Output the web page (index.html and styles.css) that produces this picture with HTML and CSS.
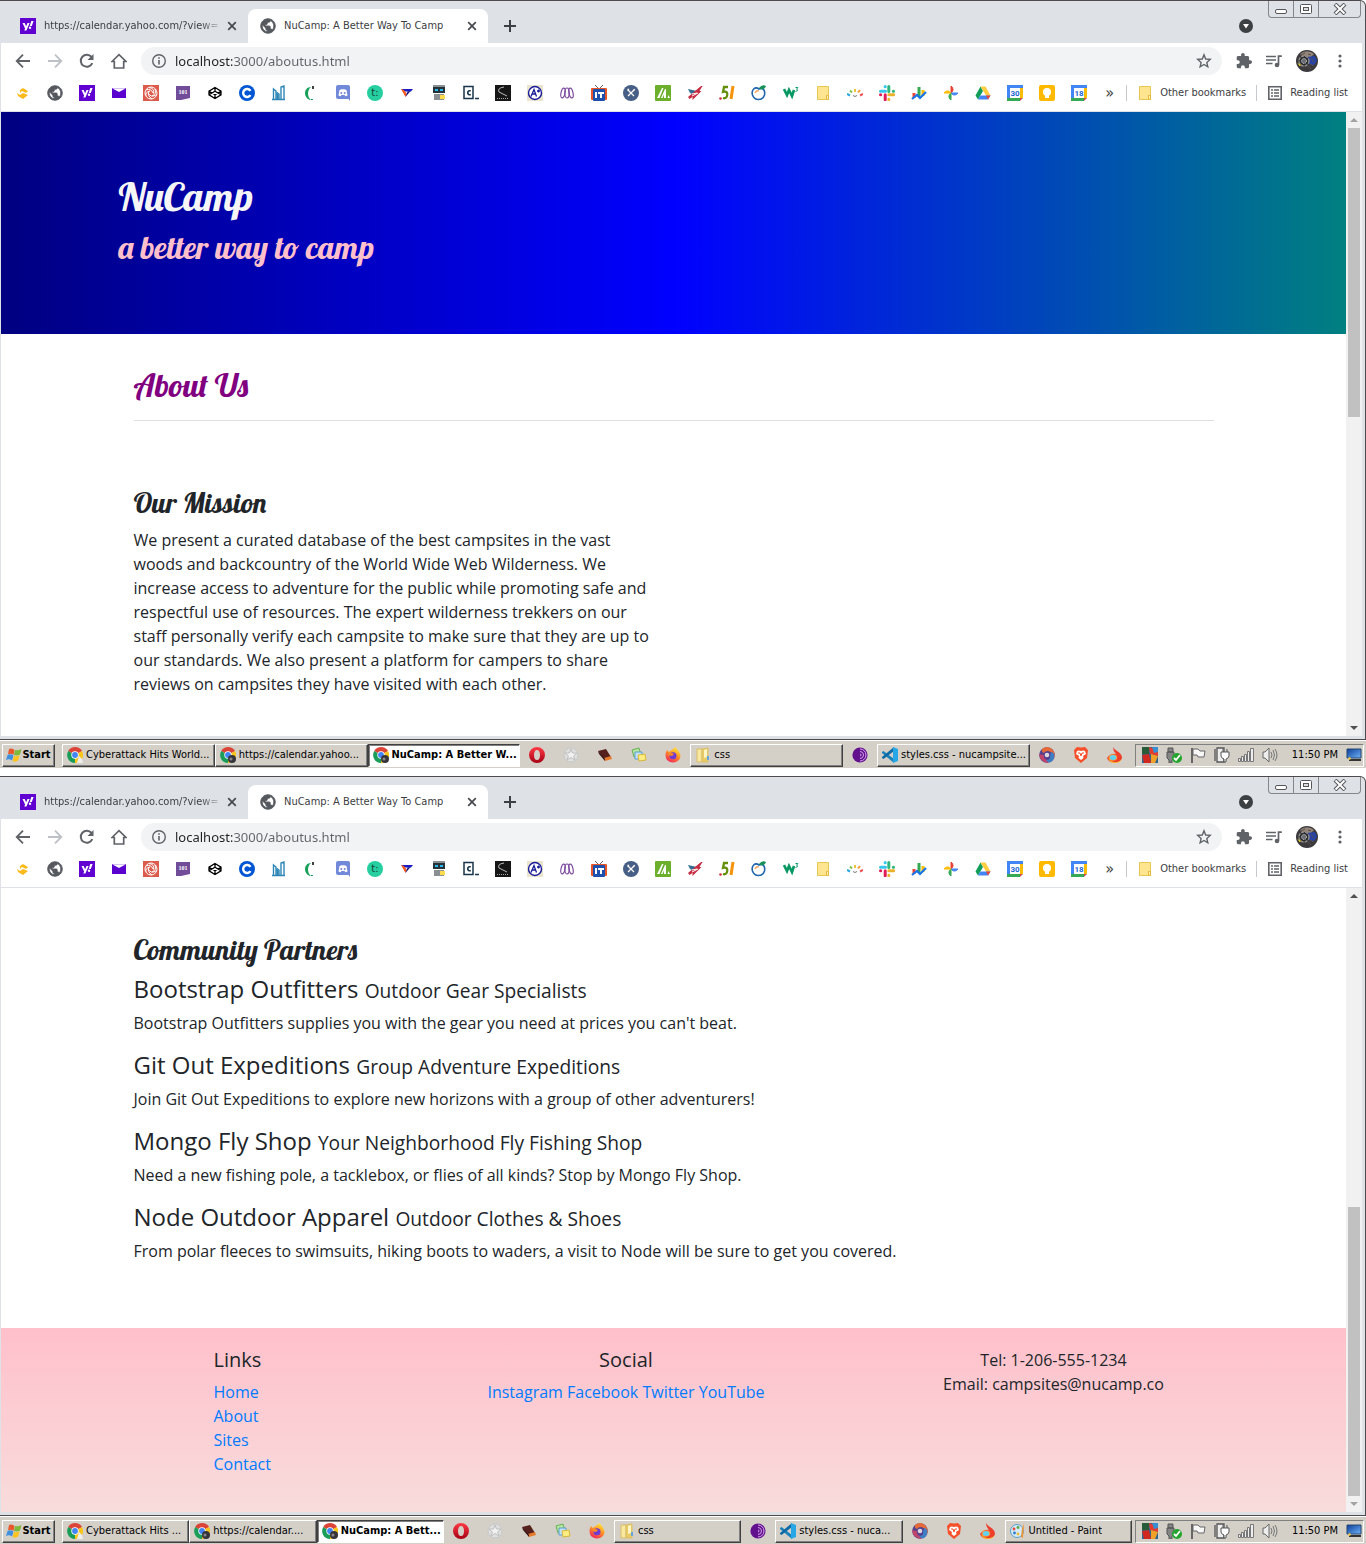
FILE: index.html
```html
<!DOCTYPE html>
<html lang="en">
<head>
<meta charset="utf-8">
<title>NuCamp: A Better Way To Camp</title>
<link rel="stylesheet" href="styles.css">
</head>
<body>
<svg class="sprite" aria-hidden="true">
  <defs>
    <linearGradient id="gOpera" x1="0" y1="0" x2="0" y2="1"><stop offset="0" stop-color="#ff3b45"/><stop offset="1" stop-color="#a70014"/></linearGradient>
    <linearGradient id="gFox" x1="0.8" y1="0" x2="0.3" y2="1"><stop offset="0" stop-color="#fff04a"/><stop offset="0.45" stop-color="#ff9a22"/><stop offset="1" stop-color="#f4235a"/></linearGradient>
    <linearGradient id="gScreen" x1="0" y1="0" x2="1" y2="1"><stop offset="0" stop-color="#0d3f9c"/><stop offset="1" stop-color="#6fb2f5"/></linearGradient>
  </defs>
  <symbol id="yahoo" viewBox="0 0 16 16"><rect width="16" height="16" fill="#6001d2"/><path d="M2.500 5h2.200l1.400 3.300L7.500 5h2.100L6.400 12.500H4.300l.8-2zM11.300 3h2.300l-1.800 5H9.700z" fill="#fff"/><circle cx="10" cy="9.800" r="1.200" fill="#fff"/></symbol>
  <symbol id="globe" viewBox="1 1 22 22"><path d="M12 2C6.480 2 2 6.480 2 12s4.480 10 10 10 10-4.480 10-10S17.520 2 12 2zm-1 17.930c-3.950-.49-7-3.850-7-7.930 0-.62.08-1.210.21-1.790L9 15v1c0 1.100.9 2 2 2v1.930zm6.900-2.540c-.26-.81-1-1.390-1.900-1.390h-1v-3c0-.55-.45-1-1-1H8v-2h2c.55 0 1-.45 1-1V7h2c1.100 0 2-.9 2-2v-.41c2.930 1.190 5 4.060 5 7.410 0 2.080-.8 3.970-2.100 5.390z" fill="#55595e" stroke="#55595e" stroke-width="1.200"/></symbol>
  <symbol id="close" viewBox="0 0 16 16"><path d="m4.200 4.200 7.600 7.600m0-7.600-7.600 7.600" stroke="#45494d" stroke-width="1.700"/></symbol>
  <symbol id="plus" viewBox="0 0 16 16"><path d="M8 2v12M2 8h12" stroke="#3c4043" stroke-width="2"/></symbol>
  <symbol id="caret" viewBox="0 0 16 16"><circle cx="8" cy="8" r="7" fill="#3c4043"/><path d="M5 6h6l-3 4.500z" fill="#fff"/></symbol>
  <symbol id="back" viewBox="0 0 16 16"><path d="M15 8H2m6-6.300L1.700 8 8 14.300" fill="none" stroke="#5f6368" stroke-width="1.800"/></symbol>
  <symbol id="forward" viewBox="0 0 16 16"><path d="M1 8h13M8 1.700 14.300 8 8 14.300" fill="none" stroke="#bdc1c6" stroke-width="1.800"/></symbol>
  <symbol id="reload" viewBox="0 0 16 16"><path d="M13.300 10.200A6 6 0 1 1 12.500 4" fill="none" stroke="#5f6368" stroke-width="2"/><path d="M14.500 1v6h-6z" fill="#5f6368"/></symbol>
  <symbol id="home" viewBox="0 0 16 16"><path d="M1 8.500 8 1.700l7 6.800h-2.300V15H3.300V8.500z" fill="none" stroke="#5f6368" stroke-width="1.700"/></symbol>
  <symbol id="info" viewBox="0 0 16 16"><circle cx="8" cy="8" r="6.300" fill="none" stroke="#5f6368" stroke-width="1.400"/><path d="M8 7v4.500M8 4.200v1.600" stroke="#5f6368" stroke-width="1.600"/></symbol>
  <symbol id="star" viewBox="0 0 16 16"><path d="m8 1.800 1.700 4.200 4.500.4-3.400 3 1 4.400L8 11.500l-3.900 2.300 1-4.400-3.400-3L6.300 6z" fill="none" stroke="#5f6368" stroke-width="1.400"/></symbol>
  <symbol id="puzzle" viewBox="1 1 22 22"><path d="M20.500 11H19V7c0-1.100-.9-2-2-2h-4V3.500C13 2.120 11.880 1 10.500 1S8 2.120 8 3.500V5H4c-1.100 0-2 .9-2 2v3.800h1.500c1.490 0 2.700 1.210 2.700 2.700s-1.210 2.700-2.700 2.700H2V20c0 1.100.9 2 2 2h3.800v-1.500c0-1.490 1.210-2.700 2.700-2.700s2.700 1.210 2.700 2.700V22H17c1.100 0 2-.9 2-2v-4h1.500c1.380 0 2.500-1.120 2.500-2.500S21.880 11 20.500 11z" fill="#5f6368"/></symbol>
  <symbol id="music" viewBox="0 0 16 16"><path d="M0 3.500h10M0 7h10M0 10.500h6.500M15.800 3.200h-3.300v8.500" stroke="#5f6368" stroke-width="1.700" fill="none"/><circle cx="11" cy="12" r="2.300" fill="#5f6368"/></symbol>
  <symbol id="avatar" viewBox="0 0 22 22"><circle cx="11" cy="11" r="11" fill="#3c3a3d"/><path d="M4 4a10 10 0 0 1 14 0l-3 3H7z" fill="#93857a"/><path d="m11 7 8-1 2 5-3 4-6-1z" fill="#2743a8"/><circle cx="8" cy="11" r="5" fill="#26282c" stroke="#8d8a85" stroke-width="1.500" stroke-dasharray="3 1"/><circle cx="8" cy="11" r="2.500" fill="#6c6e74" stroke="#ddd" stroke-dasharray="1 1"/><path d="m1.500 13 2 3 2-1z" fill="#e6d82e"/><path d="m12 16 3 3m-1-5 4 2M15 8l3 4M5 5l4-2m3 1 3 1" stroke="#57504d"/></symbol>
  <symbol id="more" viewBox="0 0 16 16"><circle cx="8" cy="3" r="1.600" fill="#5f6368"/><circle cx="8" cy="8" r="1.600" fill="#5f6368"/><circle cx="8" cy="13" r="1.600" fill="#5f6368"/></symbol>

  <symbol id="b-wave" viewBox="0 0 16 16"><path d="m5 5 3-2 5 3-2 2-4-2-2 2zM2 8l3 2 3-2 5 2-5 4-5-3z" fill="#fbb91b"/></symbol>
  <symbol id="b-mail" viewBox="0 0 16 16"><path d="M1 3h14v10H1z" fill="#5b01cf"/><path d="m1 3.300 7 3.700 7-3.700z" fill="#fff"/></symbol>
  <symbol id="b-swirl" viewBox="0 0 16 16"><rect width="16" height="16" fill="#dc5c4c"/><g fill="none" stroke="#fff"><circle cx="8" cy="8" r="6"/><path d="M3 5q5-2 7 3M6 2.500q6 1 4.500 6M12 4q2 5-3 7M13 10q-5 3-8-2M9 14q-5-3-3-8M3 11q-1-4 4-5"/></g></symbol>
  <symbol id="b-101" viewBox="0 0 16 16"><path d="M1 1h14v12l-9 2H1z" fill="#714c98"/></symbol>
  <symbol id="b-codepen" viewBox="0 0 16 16"><path d="m8 2.500 6 3.700v3.600l-6 3.700-6-3.700V6.200zM8 2.500v3.700m0 3.600v3.700M2 6.200l6 3.600 6-3.600M2 9.800l6-3.600 6 3.600" fill="none" stroke="#000" stroke-width="1.300"/></symbol>
  <symbol id="b-c" viewBox="0 0 16 16"><circle cx="8" cy="8" r="8" fill="#0056d2"/><path d="M11.500 5.800a4 4 0 1 0 0 4.400" fill="none" stroke="#fff" stroke-width="2.400"/></symbol>
  <symbol id="b-bars" viewBox="0 0 16 16"><path d="M2.500 14V4L5 6v8m1.500 0V8L8 9v5m2 0V2l3-1v13M1 14.500h13" fill="none" stroke="#2d86b6" stroke-width="1.400"/></symbol>
  <symbol id="b-moon" viewBox="0 0 16 16"><path d="M8 2C0 2 0 14 8 15 4 12 4 5 8 2z" fill="#17a05a"/><path d="M10 1v3" stroke="#111" stroke-width="1.600"/><path d="M8 14.500h2" stroke="#17a05a"/></symbol>
  <symbol id="b-discord" viewBox="0 0 16 16"><rect x="1" width="14" height="14" rx="2" fill="#7289da"/><path d="M12 12h3v4z" fill="#7289da"/><path d="M3.500 10.500 4.500 5l2-.7h3l2 .7 1 5.500-2 .8-1-1.200H6.500l-1 1.200z" fill="#fff"/><circle cx="6.300" cy="8" r="1" fill="#7289da"/><circle cx="9.700" cy="8" r="1" fill="#7289da"/></symbol>
  <symbol id="b-t" viewBox="0 0 16 16"><circle cx="8" cy="8" r="8" fill="#25cfa0"/></symbol>
  <symbol id="b-tri" viewBox="0 0 16 16"><path d="M2 4h12l-2 2.500H6z" fill="#1a1bc8"/><path d="m2 4 4.500 8L8 9 5 5z" fill="#f05a1e"/><path d="m6.500 12 5-6-3 .5z" fill="#12127e"/></symbol>
  <symbol id="b-robot" viewBox="0 0 16 16"><path d="M2 0h12v2H2zM3 9h10v6H3z" fill="#8a8f93"/><path d="M2 2h12v6H2z" fill="#253238"/><path d="M4 4h3v2H4zm5 0h3v2H9z" fill="#29b8ef"/><path d="M9 10h5v4H9z" fill="#ffdc4b"/></symbol>
  <symbol id="b-code" viewBox="0 0 16 16"><rect x="1" y="1.500" width="9" height="12" fill="none" stroke="#183549" stroke-width="1.500"/><path d="M7.700 6a2 2 0 1 0 0 3.500M12 13.500h4" fill="none" stroke="#183549" stroke-width="1.600"/></symbol>
  <symbol id="b-black" viewBox="0 0 16 16"><rect width="16" height="16" fill="#161616"/><path d="M9 2Q2 3 4 7l8 4" fill="none" stroke="#bbb"/><path d="M2 13.500h12" stroke="#aaa" stroke-dasharray="1 1"/></symbol>
  <symbol id="b-aplus" viewBox="0 0 16 16"><rect width="16" height="16" fill="#ebe5cf"/><circle cx="8" cy="8" r="6.500" fill="#fff" stroke="#1a1b99" stroke-width="1.400"/><path d="m4 11.500 3-7 2.500 7M5 9h4m1-3h3m-1.500-1.500v3" fill="none" stroke="#1a1b99" stroke-width="1.300"/></symbol>
  <symbol id="b-purple" viewBox="0 0 16 16"><g fill="none" stroke="#7d4aa0" stroke-width="1.200"><ellipse cx="4" cy="8" rx="2" ry="5" transform="rotate(12 4 8)"/><ellipse cx="8" cy="8" rx="2.200" ry="5"/><ellipse cx="12" cy="8" rx="2" ry="5" transform="rotate(-12 12 8)"/></g></symbol>
  <symbol id="b-it" viewBox="0 0 16 16"><path d="m4 0 4 4 4-4" fill="none" stroke="#666"/><rect y="3" width="16" height="12" rx="1" fill="#e9562a"/><rect x="2" y="4" width="12" height="12" rx="1" fill="#1d51ad"/><path d="M5 7v6m2-5h6m-3 0v5" stroke="#fff" stroke-width="2"/></symbol>
  <symbol id="b-tools" viewBox="0 0 16 16"><circle cx="8" cy="8" r="8" fill="#475f86"/><path d="m5 5 6 6m0-6-6 6" stroke="#fff" stroke-width="1.200"/><path d="m4.500 4.500 1.500.5M10.500 4.500l1 1" stroke="#fff" stroke-width="2"/></symbol>
  <symbol id="b-green" viewBox="0 0 16 16"><rect width="16" height="16" rx="1" fill="#6baf2d"/><path d="M2 13 7 3h1.500L4.500 13zm4 0 4-9h1v9H9V9.500L7.500 13zm6.500 0 1-3 1.500 3z" fill="#fff"/></symbol>
  <symbol id="b-wing" viewBox="0 0 16 16"><path d="m1 4 9 2-2 4-5-2z" fill="#356f91"/><path d="M1 12 14 1l1.500 0-3 5h2l-6 6-3 3v-3l-3 2z" fill="#c62d43"/><path d="m5 9 5-1M5 11l6-3" stroke="#fff"/></symbol>
  <symbol id="b-51" viewBox="0 0 16 16"><path d="M9 2H5L4 7c4-1 5 1 4 4q-1 3-4 2" fill="none" stroke="#638f0b" stroke-width="2.300"/><path d="m14 1-2 13" stroke="#f6930b" stroke-width="3"/><circle cx="1.500" cy="13.500" r="1.300" fill="#d32b35"/></symbol>
  <symbol id="b-peach" viewBox="0 0 16 16"><path d="M8 4C4 1 0 5 1.500 10c2 6 10 6 12 0 1-5-2-8-5.500-6z" fill="#fff" stroke="#1f66ac" stroke-width="1.600"/><path d="M8 3q3-4 7-2-1 4-6 3" fill="#17915a"/><path d="M4 8q1-3 4-2" fill="none" stroke="#f5a35a" stroke-width="1.300"/></symbol>
  <symbol id="b-w3" viewBox="0 0 16 16"><path d="m1 4 3 6 2-5 3 6 2-6" fill="none" stroke="#059862" stroke-width="2.600"/><path d="M12.500 2.500h2.300l-1 1.500q2 2-1.300 2.500" fill="none" stroke="#059862"/></symbol>
  <symbol id="folder" viewBox="0 0 16 16"><path d="M2.500 1.500h11v13h-11z" fill="#ffe58f" stroke="#e8c654"/><path d="M11.500 10.500h2v4h-2z" fill="#fff0b4" stroke="#e2b93d"/></symbol>
  <symbol id="b-dots" viewBox="0 0 16 16"><g stroke-width="2"><path d="m0 9 3 1.500" stroke="#26a4df"/><path d="m3 5.500 2 2" stroke="#7fc24c"/><path d="M8 4v3" stroke="#f2c331"/><path d="m13 5-2 2.500" stroke="#f39a36"/><path d="m13 10.500 3-1.500" stroke="#ee4e55"/></g><path d="M6 10.500q2 2 4 0" fill="none" stroke="#777"/></symbol>
  <symbol id="b-slack" viewBox="0 0 16 16"><g stroke-width="3" stroke-linecap="round"><path d="M1.500 6.200h5M6.200 1.500v.2" stroke="#36c5f0"/><path d="M9.800 1.500v5M14.300 6.200h.2" stroke="#2eb67d"/><path d="M9.800 9.800h5M9.800 14.300v.2" stroke="#ecb22e"/><path d="M6.200 9.800v5M1.500 9.800h.2" stroke="#e01e5a"/></g></symbol>
  <symbol id="b-chart" viewBox="0 0 16 16"><path d="M3 8v5" stroke="#ea4335" stroke-width="3"/><path d="M8 2v10" stroke="#34a853" stroke-width="3"/><path d="M12 5v6" stroke="#fbbc04" stroke-width="3"/><path d="m1 14 5-4 3 3 6-6" fill="none" stroke="#1a73e8" stroke-width="2.200"/></symbol>
  <symbol id="b-photos" viewBox="0 0 16 16"><path d="M8 8V1a4 4 0 0 1 0 7" fill="#ea4335" stroke="#ea4335"/><path d="M8 8h7a4 4 0 0 1-7 0" fill="#4285f4" stroke="#4285f4"/><path d="M8 8v7a4 4 0 0 1 0-7" fill="#34a853" stroke="#34a853"/><path d="M8 8H1a4 4 0 0 1 7 0" fill="#fbbc04" stroke="#fbbc04"/></symbol>
  <symbol id="b-drive" viewBox="0 0 16 16"><path d="M5.500 1.500.5 10.500 3 14.500l5-8.500z" fill="#0f9d58"/><path d="M5.500 1.500h5l5 9H11z" fill="#ffcd40"/><path d="M5.500 10.500h10L13 14.500H3z" fill="#4285f4"/><path d="M11 10.500h4.500l-2.500 4z" fill="#ea4335"/></symbol>
  <symbol id="cal" viewBox="0 0 16 16"><path d="M0 0h16v16H0z" fill="#4285f4"/><path d="M13 3h3v10h-3z" fill="#fbbc04"/><path d="M0 13h13v3H0z" fill="#34a853"/><path d="M13 13h3l-3 3z" fill="#ea4335"/><path d="m16 13-3 3h3z" fill="#fff"/><path d="M3 3h10v10H3z" fill="#fff"/></symbol>
  <symbol id="b-keep" viewBox="0 0 16 16"><rect width="16" height="16" rx="2" fill="#ffba00"/><circle cx="8" cy="7" r="4" fill="#fff"/><path d="M6 10h4v3H6z" fill="#fff"/></symbol>
  <symbol id="reading" viewBox="0 0 16 16"><path d="M1.800 1.800h12.400v12.400H1.800z" fill="none" stroke="#5f6368" stroke-width="1.600"/><path d="M4 5h2m1 0h5M4 8h2m1 0h5m-8 3h2m1 0h5" stroke="#5f6368" stroke-width="1.500"/></symbol>

  <symbol id="t-start" viewBox="0 0 16 16"><path d="M3 2q3-1.500 5.500 1L7.500 8Q5 6 2 7.500z" fill="#e8562b"/><path d="M9 3q3 1 6.500-1l-1.500 5.500q-3 1.500-6 .5z" fill="#7cb83a"/><path d="M1.500 8q3-1.500 6 .5l-1.500 5q-2.500-2-6-.5z" fill="#3d8fe0"/><path d="M8 9q3 1 6-1l-2 5.500q-2 2-5.500.5z" fill="#fcc31f"/></symbol>
  <symbol id="chrome" viewBox="0 0 16 16"><path d="M8 8 1.200 4A8 8 0 0 1 15 4z" fill="#dc4437"/><path d="M8 8 15 4a8 8 0 0 1-7 12z" fill="#f8c51c"/><path d="M8 8v8A8 8 0 0 1 1.200 4z" fill="#1a9d58"/><circle cx="8" cy="8" r="3.700" fill="#fff"/><circle cx="8" cy="8" r="2.900" fill="#4385f5"/></symbol>
  <symbol id="t-chrome1" viewBox="0 0 16 16"><use href="#chrome"/><path d="m10 16 2-7 3 3 1 4z" fill="#eee"/></symbol>
  <symbol id="t-chrome2" viewBox="0 0 16 16"><use href="#chrome"/><circle cx="12" cy="12" r="4" fill="#35343b"/><circle cx="11" cy="12" r="1.500" fill="#888"/></symbol>
  <symbol id="t-opera" viewBox="0 0 16 16"><path fill-rule="evenodd" d="M8 0a8 8 0 1 0 0 16A8 8 0 1 0 8 0zm0 3c2 0 3 2 3 5s-1 5-3 5-3-2-3-5 1-5 3-5z" fill="url(#gOpera)"/></symbol>
  <symbol id="t-star" viewBox="0 0 16 16"><circle cx="8" cy="8" r="7" fill="#dedfdf" stroke="#c8c8c8"/><path d="m8 2 1.500 4H14l-3.500 3 1.500 4-4-2.500L4 13l1.500-4L2 6h4.500z" fill="#f2f2f2" stroke="#bebebe"/></symbol>
  <symbol id="t-book" viewBox="0 0 16 16"><path d="m1 4 8-2 5 8-7 2z" fill="#56201c"/><path d="m7 11 7-2 1 3-7 2z" fill="#e67b2c"/><path d="m1 4 1 3 6 7v-2z" fill="#3a1212"/></symbol>
  <symbol id="t-notes" viewBox="0 0 16 16"><path d="m1 3 7-2 2 7-7 2z" fill="#b5e89e" stroke="#68ae5a"/><path d="M4 5h7v7H4z" fill="#c1e2fa" stroke="#5c9dcc"/><path d="m7 8 7-1 1 6-7 1z" fill="#ffec83" stroke="#d7b83a"/></symbol>
  <symbol id="t-fox" viewBox="0 0 16 16"><path d="M8 2q2-1 2-2 3 2 4 5 3 4 0 8-6 5-12 0Q-1 8 2 3l2 2z" fill="url(#gFox)"/><circle cx="8" cy="8.800" r="3.500" fill="#703bd1"/><path d="M3 7q3-2 6 0l-2 2q-3 0-4-2z" fill="#ff8b20"/></symbol>
  <symbol id="t-folder" viewBox="0 0 16 16"><path d="M2 2h5v13H2z" fill="#f8e79e" stroke="#d9be6a"/><path d="m7 2 6-1v14H7z" fill="#e9cb63" stroke="#d9be6a"/><path d="m9 3 3-1v8l-3 1z" fill="#fff6c8"/><path d="M12 9h2v4h-2z" fill="#64a7dc"/></symbol>
  <symbol id="t-tor" viewBox="0 0 16 16"><circle cx="8" cy="8" r="7.600" fill="#63108f"/><path d="M8 2a6 6 0 0 1 0 12M8 4.500a3.500 3.500 0 0 1 0 7M8 7a1 1 0 0 1 0 2" fill="none" stroke="#d6a6ed"/></symbol>
  <symbol id="t-code" viewBox="0 0 16 16"><path d="m0 5 1.500-1L12 12v4L0 6z" fill="#1c80bb"/><path d="m0 11 1.500 1L12 4V0L0 10z" fill="#0d6aa5"/><path d="m11 0 5 2v12l-5 2z" fill="#27a7e6"/></symbol>
  <symbol id="t-ball" viewBox="0 0 16 16"><circle cx="8" cy="8" r="7.800" fill="#54408f"/><path d="M3 2q5-4 10 0 4 4 2 9-1-6-6-7-3 0-4 2Q2 5 3 2z" fill="#e66a38"/><path d="M0 7q1 8 9 9 1-2-1-3-4-1-3-5-3 0-5-1z" fill="#c3426a"/><path d="M11 9q1 4-4 4 2 3 5 2 4-3 3-8-1-2-3-2 0 2-1 4z" fill="#3d7fc4"/><circle cx="8" cy="8" r="2.300" fill="#ddd5df"/></symbol>
  <symbol id="t-brave" viewBox="0 0 16 16"><path d="m4 0 4 .5L12 0l3 3-1 8-6 5-6-5-1-8z" fill="#f6502a"/><path d="m4 4 2-.5 2 .5 2-.5 2 .5 1 3-3 2 .5 2-2.500 2-2.500-2L6 9 3 7z" fill="#fff"/><path d="M5 6h2l1 3 1-3h2" fill="none" stroke="#f6502a"/></symbol>
  <symbol id="t-flame" viewBox="0 0 16 16"><path d="M6 0q1 2 4 4 5 3 5 7-1 4-7 4.500-6 .5-8-4.500 4-5 9-4-3-3-3-7z" fill="#ed3d2b"/><path d="M1 10q3 6 9 5 4-1 5-4-1 5-7 5-6 0-7-6z" fill="#ffb21f"/><ellipse cx="6" cy="10.500" rx="4.200" ry="3.200" fill="#ff9634"/><ellipse cx="6" cy="10.500" rx="3.200" ry="2.500" fill="#62d0ef"/></symbol>
  <symbol id="t-paint" viewBox="0 0 16 16"><ellipse cx="7" cy="8" rx="6.500" ry="6.500" fill="#d5eafa" stroke="#5c9fc8"/><circle cx="4" cy="6" r="1.400" fill="#e64a35"/><circle cx="8" cy="4.500" r="1.400" fill="#52a93d"/><circle cx="4.500" cy="10" r="1.400" fill="#317dc8"/><circle cx="8" cy="11" r="1.400" fill="#eebf29"/><path d="m14 1-1 14-2-1 1-9z" fill="#eb9738"/></symbol>
  <symbol id="y-tiles" viewBox="0 0 16 16"><path d="M0 0h16v16H0z" fill="#2d6690"/><path d="M0 0h7v7H0z" fill="#275b39"/><path d="m7 0 9 3v6L8 7z" fill="#e63b2d"/><path d="m0 8 7-1 2 9H2z" fill="#d0281f"/><path d="m9 7 7 2-3 7H9z" fill="#f3a027"/><path d="M10 0h6v5l-4 1z" fill="#398ed3"/></symbol>
  <symbol id="y-usb" viewBox="0 0 16 16"><path d="M2 1h5v4H2zM1 5h7v6l-2 2v3H3v-3l-2-2z" fill="#858585" stroke="#555"/><circle cx="11" cy="11" r="5" fill="#25a52e"/><path d="m8 11 2 2 4-5" fill="none" stroke="#fff" stroke-width="1.800"/></symbol>
  <symbol id="y-flag" viewBox="0 0 16 16"><path d="M2 1v15" stroke="#666" stroke-width="2"/><path d="M3 2h5l2 2h5l-1 6H8L7 8H3z" fill="#f7f7f7" stroke="#666"/></symbol>
  <symbol id="y-power" viewBox="0 0 16 16"><path d="M3 1h7v14H3zM1 2v12" fill="#eee" stroke="#555" stroke-width="1.300"/><path d="M7 5h8v4q-1 3-3 3v3h-2v-3Q7 11 7 9zM9 2v3m4-3v3" fill="#fff" stroke="#555"/></symbol>
  <symbol id="y-signal" viewBox="0 0 16 16"><path d="M.5 11.500h2v3h-2zm3-2h2v5h-2zm3-2h2v7h-2zm3-3h2v10h-2zm3-3h3v13h-3z" fill="#eee" stroke="#777"/></symbol>
  <symbol id="y-sound" viewBox="0 0 16 16"><path d="M1 5h2l4-4v14l-4-4H1z" fill="#eee" stroke="#666"/><path d="M9 5q2 3 0 6m2-8q3 5 0 10m2-11q4 6 0 12" fill="none" stroke="#777"/></symbol>
  <symbol id="y-desk" viewBox="0 0 16 16"><path d="M1 2h14v9H1z" fill="url(#gScreen)" stroke="#24466f"/><path d="M3 13h12" stroke="#333" stroke-width="2"/><circle cx="3.500" cy="11.500" r="1.300" fill="#f5d44a"/></symbol>
  <symbol id="w-min" viewBox="0 0 16 12"><rect x="2.500" y="6.500" width="11" height="4" rx="1.500" fill="#fff" stroke="#55565c"/></symbol>
  <symbol id="w-max" viewBox="0 0 16 12"><rect x="2.500" y="1.500" width="11" height="9" rx="1" fill="#fff" stroke="#55565c"/><rect x="5.500" y="4.500" width="5" height="3" fill="#ddd" stroke="#55565c"/></symbol>
  <symbol id="w-close" viewBox="0 0 16 12"><path d="m3 1 10 10m0-10L3 11" stroke="#55565c" stroke-width="4"/><path d="m3.500 1.500 9 9m0-9-9 9" stroke="#fff" stroke-width="2"/></symbol>
</svg>

<section class="screen">
  <div class="window">
    <div class="chrome">
      <div class="tabstrip">
        <div class="tab"><svg><use href="#yahoo"/></svg><span class="tab-title fade">https://calendar.yahoo.com/?view=</span><button aria-label="Close tab"><svg><use href="#close"/></svg></button></div>
        <div class="tab active"><svg><use href="#globe"/></svg><span class="tab-title">NuCamp: A Better Way To Camp</span><button aria-label="Close tab"><svg><use href="#close"/></svg></button></div>
        <button class="new-tab" aria-label="New tab"><svg><use href="#plus"/></svg></button>
        <button class="tab-search" aria-label="Search tabs"><svg><use href="#caret"/></svg></button>
        <div class="controls"><button aria-label="Minimize"><svg><use href="#w-min"/></svg></button><button aria-label="Restore"><svg><use href="#w-max"/></svg></button><button class="wide" aria-label="Close"><svg><use href="#w-close"/></svg></button></div>
      </div>
      <div class="toolbar">
        <button aria-label="Back"><svg><use href="#back"/></svg></button><button aria-label="Forward"><svg><use href="#forward"/></svg></button><button aria-label="Reload"><svg><use href="#reload"/></svg></button><button aria-label="Home"><svg><use href="#home"/></svg></button>
        <div class="omnibox"><svg><use href="#info"/></svg><input type="text" aria-label="Address" value="localhost:3000/aboutus.html"><button aria-label="Bookmark this page"><svg><use href="#star"/></svg></button></div>
        <div class="actions"><button aria-label="Extensions"><svg><use href="#puzzle"/></svg></button><button aria-label="Media"><svg><use href="#music"/></svg></button><button aria-label="Profile"><svg class="avatar"><use href="#avatar"/></svg></button><button aria-label="Menu"><svg><use href="#more"/></svg></button></div>
      </div>
      <nav class="bookmarks" aria-label="Bookmarks">
        <a href="#"><svg><use href="#b-wave"/></svg></a><a href="#"><svg><use href="#globe"/></svg></a><a href="#"><svg><use href="#yahoo"/></svg></a><a href="#"><svg><use href="#b-mail"/></svg></a><a href="#"><svg><use href="#b-swirl"/></svg></a><a href="#"><svg><use href="#b-101"/><text class="label-101" x="8" y="9">101</text></svg></a><a href="#"><svg><use href="#b-codepen"/></svg></a><a href="#"><svg><use href="#b-c"/></svg></a><a href="#"><svg><use href="#b-bars"/></svg></a><a href="#"><svg><use href="#b-moon"/></svg></a><a href="#"><svg><use href="#b-discord"/></svg></a><a href="#"><svg><use href="#b-t"/><text class="label-t" x="8" y="11">t:</text></svg></a><a href="#"><svg><use href="#b-tri"/></svg></a><a href="#"><svg><use href="#b-robot"/></svg></a><a href="#"><svg><use href="#b-code"/></svg></a><a href="#"><svg><use href="#b-black"/></svg></a><a href="#"><svg><use href="#b-aplus"/></svg></a><a href="#"><svg><use href="#b-purple"/></svg></a><a href="#"><svg><use href="#b-it"/></svg></a><a href="#"><svg><use href="#b-tools"/></svg></a><a href="#"><svg><use href="#b-green"/></svg></a><a href="#"><svg><use href="#b-wing"/></svg></a><a href="#"><svg><use href="#b-51"/></svg></a><a href="#"><svg><use href="#b-peach"/></svg></a><a href="#"><svg><use href="#b-w3"/></svg></a><a href="#"><svg><use href="#folder"/></svg></a><a href="#"><svg><use href="#b-dots"/></svg></a><a href="#"><svg><use href="#b-slack"/></svg></a><a href="#"><svg><use href="#b-chart"/></svg></a><a href="#"><svg><use href="#b-photos"/></svg></a><a href="#"><svg><use href="#b-drive"/></svg></a><a href="#"><svg><use href="#cal"/><text class="label-day" x="8" y="11">30</text></svg></a><a href="#"><svg><use href="#b-keep"/></svg></a><a href="#"><svg><use href="#cal"/><text class="label-day" x="8" y="11">18</text></svg></a>
        <button class="overflow">»</button>
        <button class="labelled"><svg><use href="#folder"/></svg>Other bookmarks</button>
        <button class="labelled"><svg><use href="#reading"/></svg>Reading list</button>
      </nav>
    </div>
    <div class="viewport">
      <div class="page">
        <header class="jumbotron"><div class="container"><h1>NuCamp</h1><h2>a better way to camp</h2></div></header>
        <main class="content about">
          <h2 class="page-title">About Us</h2>
          <hr>
          <section class="mission">
            <h3>Our Mission</h3>
            <p>We present a curated database of the best campsites in the vast woods and backcountry of the World Wide Web Wilderness. We increase access to adventure for the public while promoting safe and respectful use of resources. The expert wilderness trekkers on our staff personally verify each campsite to make sure that they are up to our standards. We also present a platform for campers to share reviews on campsites they have visited with each other.</p>
          </section>
        </main>
      </div>
      <div class="scrollbar at-top"><i class="up"></i><i class="thumb"></i><i class="down"></i></div>
    </div>
  </div>
  <div class="taskbar">
    <button class="start"><svg><use href="#t-start"/></svg>Start</button>
    <button class="task"><svg><use href="#t-chrome1"/></svg><span>Cyberattack Hits World...</span></button><button class="task"><svg><use href="#t-chrome2"/></svg><span>https://calendar.yahoo...</span></button><button class="task pressed"><svg><use href="#t-chrome2"/></svg><span>NuCamp: A Better W...</span></button>
    <button class="quick" aria-label="Opera"><svg><use href="#t-opera"/></svg></button><button class="quick" aria-label="Favorites"><svg><use href="#t-star"/></svg></button><button class="quick" aria-label="Dictionary"><svg><use href="#t-book"/></svg></button><button class="quick" aria-label="Notes"><svg><use href="#t-notes"/></svg></button><button class="quick" aria-label="Firefox"><svg><use href="#t-fox"/></svg></button>
    <button class="task"><svg><use href="#t-folder"/></svg><span>css</span></button>
    <button class="quick" aria-label="Tor"><svg><use href="#t-tor"/></svg></button>
    <button class="task"><svg><use href="#t-code"/></svg><span>styles.css - nucampsite...</span></button>
    <button class="quick" aria-label="Browser"><svg><use href="#t-ball"/></svg></button><button class="quick" aria-label="Brave"><svg><use href="#t-brave"/></svg></button><button class="quick" aria-label="Torch"><svg><use href="#t-flame"/></svg></button>
    <div class="tray"><svg><use href="#y-tiles"/></svg><svg><use href="#y-usb"/></svg><svg><use href="#y-flag"/></svg><svg><use href="#y-power"/></svg><svg><use href="#y-signal"/></svg><svg><use href="#y-sound"/></svg><time>11:50 PM</time><svg><use href="#y-desk"/></svg></div>
  </div>
</section>

<section class="screen">
  <div class="window">
    <div class="chrome">
      <div class="tabstrip">
        <div class="tab"><svg><use href="#yahoo"/></svg><span class="tab-title fade">https://calendar.yahoo.com/?view=</span><button aria-label="Close tab"><svg><use href="#close"/></svg></button></div>
        <div class="tab active"><svg><use href="#globe"/></svg><span class="tab-title">NuCamp: A Better Way To Camp</span><button aria-label="Close tab"><svg><use href="#close"/></svg></button></div>
        <button class="new-tab" aria-label="New tab"><svg><use href="#plus"/></svg></button>
        <button class="tab-search" aria-label="Search tabs"><svg><use href="#caret"/></svg></button>
        <div class="controls"><button aria-label="Minimize"><svg><use href="#w-min"/></svg></button><button aria-label="Restore"><svg><use href="#w-max"/></svg></button><button class="wide" aria-label="Close"><svg><use href="#w-close"/></svg></button></div>
      </div>
      <div class="toolbar">
        <button aria-label="Back"><svg><use href="#back"/></svg></button><button aria-label="Forward"><svg><use href="#forward"/></svg></button><button aria-label="Reload"><svg><use href="#reload"/></svg></button><button aria-label="Home"><svg><use href="#home"/></svg></button>
        <div class="omnibox"><svg><use href="#info"/></svg><input type="text" aria-label="Address" value="localhost:3000/aboutus.html"><button aria-label="Bookmark this page"><svg><use href="#star"/></svg></button></div>
        <div class="actions"><button aria-label="Extensions"><svg><use href="#puzzle"/></svg></button><button aria-label="Media"><svg><use href="#music"/></svg></button><button aria-label="Profile"><svg class="avatar"><use href="#avatar"/></svg></button><button aria-label="Menu"><svg><use href="#more"/></svg></button></div>
      </div>
      <nav class="bookmarks" aria-label="Bookmarks">
        <a href="#"><svg><use href="#b-wave"/></svg></a><a href="#"><svg><use href="#globe"/></svg></a><a href="#"><svg><use href="#yahoo"/></svg></a><a href="#"><svg><use href="#b-mail"/></svg></a><a href="#"><svg><use href="#b-swirl"/></svg></a><a href="#"><svg><use href="#b-101"/><text class="label-101" x="8" y="9">101</text></svg></a><a href="#"><svg><use href="#b-codepen"/></svg></a><a href="#"><svg><use href="#b-c"/></svg></a><a href="#"><svg><use href="#b-bars"/></svg></a><a href="#"><svg><use href="#b-moon"/></svg></a><a href="#"><svg><use href="#b-discord"/></svg></a><a href="#"><svg><use href="#b-t"/><text class="label-t" x="8" y="11">t:</text></svg></a><a href="#"><svg><use href="#b-tri"/></svg></a><a href="#"><svg><use href="#b-robot"/></svg></a><a href="#"><svg><use href="#b-code"/></svg></a><a href="#"><svg><use href="#b-black"/></svg></a><a href="#"><svg><use href="#b-aplus"/></svg></a><a href="#"><svg><use href="#b-purple"/></svg></a><a href="#"><svg><use href="#b-it"/></svg></a><a href="#"><svg><use href="#b-tools"/></svg></a><a href="#"><svg><use href="#b-green"/></svg></a><a href="#"><svg><use href="#b-wing"/></svg></a><a href="#"><svg><use href="#b-51"/></svg></a><a href="#"><svg><use href="#b-peach"/></svg></a><a href="#"><svg><use href="#b-w3"/></svg></a><a href="#"><svg><use href="#folder"/></svg></a><a href="#"><svg><use href="#b-dots"/></svg></a><a href="#"><svg><use href="#b-slack"/></svg></a><a href="#"><svg><use href="#b-chart"/></svg></a><a href="#"><svg><use href="#b-photos"/></svg></a><a href="#"><svg><use href="#b-drive"/></svg></a><a href="#"><svg><use href="#cal"/><text class="label-day" x="8" y="11">30</text></svg></a><a href="#"><svg><use href="#b-keep"/></svg></a><a href="#"><svg><use href="#cal"/><text class="label-day" x="8" y="11">18</text></svg></a>
        <button class="overflow">»</button>
        <button class="labelled"><svg><use href="#folder"/></svg>Other bookmarks</button>
        <button class="labelled"><svg><use href="#reading"/></svg>Reading list</button>
      </nav>
    </div>
    <div class="viewport">
      <div class="page">
        <section class="content partners">
          <h3>Community Partners</h3>
          <h4>Bootstrap Outfitters <small>Outdoor Gear Specialists</small></h4>
          <p>Bootstrap Outfitters supplies you with the gear you need at prices you can't beat.</p>
          <h4>Git Out Expeditions <small>Group Adventure Expeditions</small></h4>
          <p>Join Git Out Expeditions to explore new horizons with a group of other adventurers!</p>
          <h4>Mongo Fly Shop <small>Your Neighborhood Fly Fishing Shop</small></h4>
          <p>Need a new fishing pole, a tacklebox, or flies of all kinds? Stop by Mongo Fly Shop.</p>
          <h4>Node Outdoor Apparel <small>Outdoor Clothes &amp; Shoes</small></h4>
          <p>From polar fleeces to swimsuits, hiking boots to waders, a visit to Node will be sure to get you covered.</p>
        </section>
        <footer class="site-footer">
          <div class="footer-grid">
            <nav class="links"><h5>Links</h5><a href="#">Home</a><a href="#">About</a><a href="#">Sites</a><a href="#">Contact</a></nav>
            <div class="social"><h5>Social</h5><a href="#">Instagram</a> <a href="#">Facebook</a> <a href="#">Twitter</a> <a href="#">YouTube</a></div>
            <address>Tel: 1-206-555-1234<br>Email: campsites@nucamp.co</address>
          </div>
        </footer>
      </div>
      <div class="scrollbar at-bottom"><i class="up"></i><i class="thumb"></i><i class="down"></i></div>
    </div>
  </div>
  <div class="taskbar">
    <button class="start"><svg><use href="#t-start"/></svg>Start</button>
    <button class="task"><svg><use href="#t-chrome1"/></svg><span>Cyberattack Hits ...</span></button><button class="task"><svg><use href="#t-chrome2"/></svg><span>https://calendar....</span></button><button class="task pressed"><svg><use href="#t-chrome2"/></svg><span>NuCamp: A Bett...</span></button>
    <button class="quick" aria-label="Opera"><svg><use href="#t-opera"/></svg></button><button class="quick" aria-label="Favorites"><svg><use href="#t-star"/></svg></button><button class="quick" aria-label="Dictionary"><svg><use href="#t-book"/></svg></button><button class="quick" aria-label="Notes"><svg><use href="#t-notes"/></svg></button><button class="quick" aria-label="Firefox"><svg><use href="#t-fox"/></svg></button>
    <button class="task"><svg><use href="#t-folder"/></svg><span>css</span></button>
    <button class="quick" aria-label="Tor"><svg><use href="#t-tor"/></svg></button>
    <button class="task"><svg><use href="#t-code"/></svg><span>styles.css - nuca...</span></button>
    <button class="quick" aria-label="Browser"><svg><use href="#t-ball"/></svg></button><button class="quick" aria-label="Brave"><svg><use href="#t-brave"/></svg></button><button class="quick" aria-label="Torch"><svg><use href="#t-flame"/></svg></button>
    <button class="task"><svg><use href="#t-paint"/></svg><span>Untitled - Paint</span></button>
    <div class="tray"><svg><use href="#y-tiles"/></svg><svg><use href="#y-usb"/></svg><svg><use href="#y-flag"/></svg><svg><use href="#y-power"/></svg><svg><use href="#y-signal"/></svg><svg><use href="#y-sound"/></svg><time>11:50 PM</time><svg><use href="#y-desk"/></svg></div>
  </div>
</section>
</body>
</html>
```
FILE: styles.css
```css
* { box-sizing: border-box; }

body {
  margin: 0;
  background: #fff;
  color: #212529;
  font: 16px/24px "Open Sans", sans-serif;
  display: flex;
  flex-direction: column;
  gap: 8px;
}

.sprite { position: absolute; width: 0; height: 0; }

svg { width: 16px; height: 16px; flex: none; display: block; }

button {
  border: 0;
  padding: 0;
  background: none;
  font: inherit;
  color: inherit;
  display: flex;
  align-items: center;
  justify-content: center;
}

/* Browser window */
.window {
  border: solid #4d4a4d;
  border-width: 1px 1px 1px 0;
  border-radius: 0 6px 0 0;
  padding: 0 3px 3px 1px;
  background: #dee1e6;
}

.chrome {
  font: 11px/16px "DejaVu Sans Condensed", "DejaVu Sans", sans-serif;
  font-stretch: condensed;
  color: #3c4043;
}

.tabstrip { display: flex; align-items: flex-start; height: 42px; padding-left: 7px; }

.tab {
  display: flex;
  align-items: center;
  width: 240px;
  height: 34px;
  margin-top: 8px;
  padding: 0 8px 0 12px;
}

.tab.active { background: #fff; border-radius: 8px 8px 0 0; }
.tab-title { flex: 1; margin: 0 2px 0 8px; white-space: nowrap; overflow: hidden; }
.fade { mask-image: linear-gradient(to right, #000 88%, transparent); }
.new-tab { margin: 17px 0 0 14px; }
.tab-search { margin: 17px 14px 0 auto; }

.controls {
  display: flex;
  border: 1px solid #85868c;
  border-top: 0;
  border-radius: 0 0 4px 4px;
  margin-right: 1px;
}

.controls button { width: 25px; height: 16px; border-right: 1px solid #85868c; }
.controls .wide { width: 41px; border: 0; }
.controls svg { height: 12px; }

.toolbar { display: flex; align-items: center; gap: 16px; background: #fff; height: 36px; padding: 0 14px; }

.omnibox {
  flex: 1;
  display: flex;
  align-items: center;
  gap: 8px;
  height: 28px;
  border-radius: 14px;
  background: #f1f3f4;
  padding: 0 10px;
  margin: 0 -2px;
}

.omnibox input {
  flex: 1;
  min-width: 0;
  border: 0;
  padding: 0;
  outline: 0;
  font: 13px/20px "Noto Sans", sans-serif;
  color: transparent;
  background: linear-gradient(to right, #202124 57px, #5f6368 57px);
  background-clip: text;
}

.actions { display: flex; align-items: center; gap: 14px; }
.actions .avatar { width: 22px; height: 22px; }

.bookmarks {
  display: flex;
  align-items: center;
  gap: 16px;
  height: 33px;
  padding: 0 14px 4px;
  background: #fff;
  border-bottom: 1px solid #dee1e6;
}

.bookmarks text { text-anchor: middle; }
.label-101 { font: 700 6px "Liberation Serif", serif; fill: #fff; }
.label-t { font: 10px "DejaVu Sans", sans-serif; fill: #173f3a; }
.label-day { font: 700 8px Roboto, sans-serif; fill: #1a66d2; }

.bookmarks .overflow { flex: 1; font-size: 16px; }
.labelled { gap: 7px; white-space: nowrap; padding-left: 10px; margin-left: -6px; border-left: 1px solid #c5c8cc; }

/* Page viewport */
.viewport { display: flex; background: #fff; min-height: 624px; }
.page { flex: 1; min-width: 0; display: flex; flex-direction: column; }

.scrollbar { width: 16px; background: #f1f1f1; display: flex; flex-direction: column; align-items: center; padding: 0 2px; }
.thumb { width: 12px; height: 289px; background: #c1c1c1; }
.up, .down { height: 16px; display: grid; place-items: center; }
.up::before, .down::before { content: ""; border: solid transparent; border-width: 0 4px; }
.up::before { border-bottom: 4px solid #505050; }
.down::before { border-top: 4px solid #505050; }
.at-top .up::before { border-bottom-color: #a3a3a3; }
.at-bottom .down::before { border-top-color: #a3a3a3; }
.at-top .down { margin-top: auto; }
.at-bottom .up { margin-bottom: auto; }

h1, h2, h3, h4, h5, p { margin: 0; font-weight: 400; }
h1, h2, h3 { font-family: Lobster, "Liberation Serif", serif; }
h1 { font-size: 40px; line-height: 48px; margin-bottom: 8px; color: #f5f5f5; }
h2 { font-size: 32px; line-height: 38px; color: pink; }
h3 { font-size: 28px; line-height: 34px; margin-bottom: 8px; }
h4 { font-size: 24px; line-height: 28px; margin-bottom: 8px; }
h4 small { font-size: 80%; line-height: 1; }
h5 { font-size: 20px; line-height: 24px; margin-bottom: 8px; }

.jumbotron { padding: 60px 0 68px; background: linear-gradient(to right, navy, blue, teal); }
.container { max-width: 1140px; margin: 0 auto; padding: 0 15px; }
.content { width: 100%; max-width: 1080px; margin: 0 auto; }
.about { padding: 32px 0 39px; }
.page-title { color: purple; }
hr { margin: 16px 0 65px; border: 0; border-top: 1px solid #dfdfdf; }
.mission { width: 50%; padding-right: 15px; }

.partners { padding: 45px 0 49px; }
.partners p { margin-bottom: 16px; }

.site-footer { flex: 1; padding: 20px 0 36px; background: linear-gradient(pink, #f8dcdc); }
.footer-grid { display: grid; grid-template-columns: 2fr 5fr 4fr; max-width: 1140px; margin: 0 auto; padding-left: 95px; }
.links { display: flex; flex-direction: column; padding-left: 15px; }
.social, address { text-align: center; font-style: normal; }
.site-footer a { color: #007bff; text-decoration: none; }

/* Taskbar */
.taskbar {
  display: flex;
  align-items: center;
  height: 28px;
  padding: 2px 2px 1px;
  background: #d4d0c8;
  border-top: 1px solid #fff;
  font: 11px/16px "DejaVu Sans Condensed", "DejaVu Sans", sans-serif;
  font-stretch: condensed;
  color: #000;
}

.start, .task { height: 23px; border: 1px solid; border-color: #fff #404040 #404040 #fff; box-shadow: inset -1px -1px #808080; }
.start { width: 53px; margin-right: 7px; font-weight: 700; }
.task { flex: 1 1 0; min-width: 0; padding: 0 2px 0 4px; gap: 3px; justify-content: flex-start; }
.task span { white-space: nowrap; overflow: hidden; }
.pressed { background: #fff; font-weight: 700; border-color: #404040 #fff #fff #404040; box-shadow: inset 1px 1px #808080; }
.quick { width: 34px; }

.tray {
  display: flex;
  align-items: center;
  gap: 8px;
  height: 23px;
  margin-left: 3px;
  padding: 0 1px 0 6px;
  border: 1px solid;
  border-color: #808080 #fff #fff #808080;
}

.tray time { margin-left: 6px; white-space: nowrap; }
```
